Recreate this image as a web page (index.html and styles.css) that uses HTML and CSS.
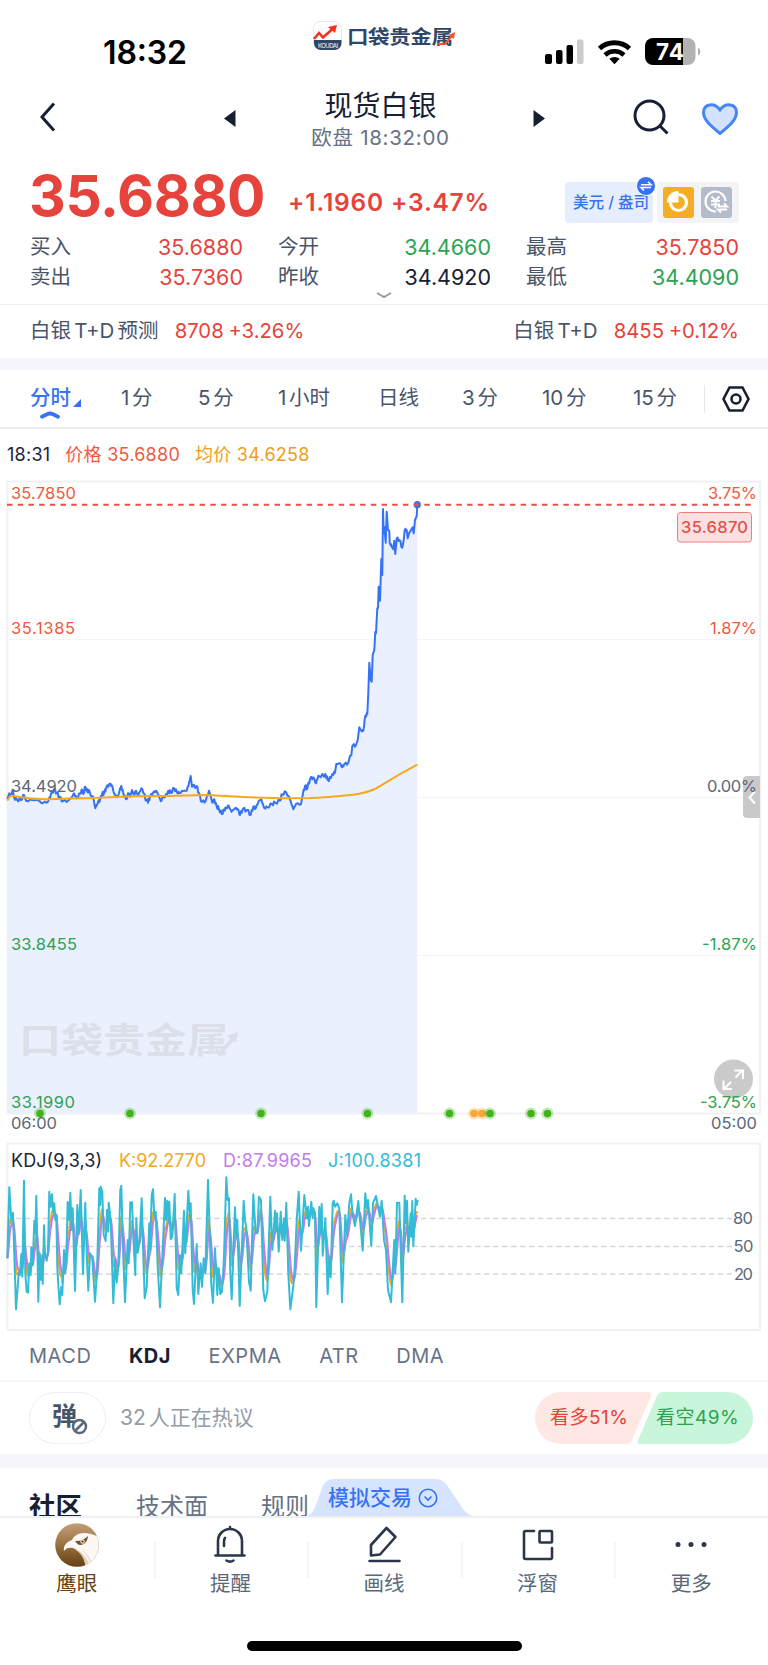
FILE: index.html
```html
<!DOCTYPE html>
<html lang="zh-CN">
<head>
  <meta charset="UTF-8">
  <title>现货白银</title>
  <link rel="stylesheet" href="styles.css">
</head>
<body>
  <div class="status-bar">
    <svg width="768" height="80" viewBox="0 0 768 80">
      <text class="clock" x="103" y="64" textLength="84">18:32</text>
      <!-- app logo -->
      <rect x="313.500" y="21.500" width="28" height="28" rx="7" fill="#fff" stroke="#e6e8ec"/>
      <path d="M314 40h27.500v3a7 7 0 0 1-7 7h-13.500a7 7 0 0 1-7-7z" fill="#2f4667"/>
      <path d="M314 39l5-6 4 4.500 10-9" fill="none" stroke="#f5301b" stroke-width="2.600"/>
      <path d="M328 27l9-2-2 8z" fill="#f5301b"/>
      <text x="318" y="47.500" font-size="6" fill="#fff" textLength="20">KOUDAI</text>
      <text class="brand" transform="translate(347 43.500) scale(1 .88)" textLength="106">口袋贵金属</text>
      <path d="M437 44h8l7-8" fill="none" stroke="#f5532f" stroke-width="2"/>
      <path d="M449 35l6-3-1 7z" fill="#f5532f"/>
      <!-- signal -->
      <rect x="545" y="54" width="7" height="10" rx="2"/>
      <rect x="556" y="50" width="6.500" height="14" rx="2"/>
      <rect x="566.500" y="45" width="6.500" height="19" rx="2"/>
      <rect x="577" y="39.500" width="6.500" height="24.500" rx="2" fill="#ccc"/>
      <!-- wifi -->
      <path d="M599.500 48.500a22.500 22.500 0 0 1 30 0" fill="none" stroke="#000" stroke-width="5"/>
      <path d="M605 55a14 14 0 0 1 19 0" fill="none" stroke="#000" stroke-width="4.600"/>
      <path d="M609.300 58.800a8 8 0 0 1 10.400 0l-5.200 5.400z"/>
      <!-- battery -->
      <path d="M653 38h30v27h-30a8 8 0 0 1-8-8v-11a8 8 0 0 1 8-8z"/>
      <path d="M683 38h4.500a8 8 0 0 1 8 8v11a8 8 0 0 1-8 8h-4.500z" fill="#b2b2b2"/>
      <path d="M698 47.500a4.500 4.500 0 0 1 0 8z" fill="#b2b2b2"/>
      <text x="656" y="60" font-size="22.500" font-weight="700" fill="#fff" textLength="28">74</text>
    </svg>
  </div>

  <header class="header">
    <svg class="back" width="16" height="30" viewBox="0 0 16 30"><path d="M14 1.500L2 15l12 13.500"/></svg>
    <svg class="prev" width="12" height="17" viewBox="0 0 12 17"><path d="M11.500 0v17L0 8.500z"/></svg>
    <div class="title">
      <h1>现货白银</h1>
      <p>欧盘 18:32:00</p>
    </div>
    <svg class="next" width="12" height="17" viewBox="0 0 12 17"><path d="M.5 0v17L12 8.500z"/></svg>
    <svg class="search" width="36" height="36" viewBox="0 0 36 36"><circle cx="16.500" cy="16.500" r="14.500"/><path d="M26.500 26.500l8 8"/></svg>
    <svg class="heart" width="36" height="32" viewBox="0 0 36 32"><path d="M18 30.500C8 22 1.500 16.500 1.500 9.500 1.500 1.500 12-1.500 18 7 24-1.500 34.500 1.500 34.500 9.500 34.500 16.500 28 22 18 30.500z"/></svg>
  </header>

  <section class="quote">
    <div class="quote-top">
      <span class="price">35.6880</span>
      <span class="change">+1.1960 +3.47%</span>
      <div class="unit">美元 / 盎司
        <svg class="swap" width="20" height="20" viewBox="0 0 20 20"><circle cx="10" cy="10" r="9.500" fill="#3772f5" stroke="#fff"/><path d="M5 8.700h10l-3-3M15 11.500H5l3 3" fill="none" stroke="#fff" stroke-width="1.600"/></svg>
      </div>
      <div class="modes">
        <svg width="31" height="31" viewBox="0 0 31 31"><rect width="31" height="31" rx="3" fill="#f3ae25"/><path d="M15.500 7.500a8 8 0 1 1-8 8" fill="none" stroke="#fff" stroke-width="3.200"/><path d="M4 15.500A11 11 0 0 1 15.500 4v11.500z" fill="#fff"/></svg>
        <svg width="31" height="31" viewBox="0 0 31 31"><rect width="31" height="31" rx="3" fill="#b5bcc9"/><path d="M15 24.500A10 10 0 1 1 24.500 14" fill="none" stroke="#fff" stroke-width="2.200"/><path d="M10.500 9.500l4 4 4-4M10 14h9M10 17.500h9M14.500 13.500V21M17 19.500h9l-3-3M26 22.500h-9l3 3" fill="none" stroke="#fff" stroke-width="2"/></svg>
      </div>
    </div>
    <div class="quote-grid">
      <div class="cell"><span>买入</span><b class="up">35.6880</b></div>
      <div class="cell"><span>今开</span><b class="down">34.4660</b></div>
      <div class="cell"><span>最高</span><b class="up">35.7850</b></div>
      <div class="cell"><span>卖出</span><b class="up">35.7360</b></div>
      <div class="cell"><span>昨收</span><b>34.4920</b></div>
      <div class="cell"><span>最低</span><b class="down">34.4090</b></div>
    </div>
    <svg class="more-arrow" width="16" height="7" viewBox="0 0 16 7"><path d="M1 1l7 4 7-4" fill="none" stroke="#929ba8" stroke-width="2"/></svg>
  </section>

  <section class="related">
    <div><span>白银 T+D 预测</span><b>8708 +3.26%</b></div>
    <div><span>白银 T+D</span><b>8455 +0.12%</b></div>
  </section>

  <nav class="periods">
    <span class="period active">分时
      <svg class="corner" width="8" height="8" viewBox="0 0 8 8"><path d="M8 0v8H0z"/></svg>
      <svg class="caret" width="20" height="8" viewBox="0 0 20 8"><path d="M2 5.700l5.500-2.700q2.500-1 5 0l5.500 2.700"/></svg>
    </span>
    <span class="period">1 分</span>
    <span class="period">5 分</span>
    <span class="period">1 小时</span>
    <span class="period">日线</span>
    <span class="period">3 分</span>
    <span class="period">10 分</span>
    <span class="period">15 分</span>
    <div class="settings">
      <svg width="28" height="26" viewBox="0 0 28 26"><path d="M7.500 1.500h13L26.500 13l-6 11.500h-13L1.500 13z"/><circle cx="14" cy="13" r="4.500"/></svg>
    </div>
  </nav>

  <div class="legend">
    <span class="time">18:31</span>
    <span class="last">价格 35.6880</span>
    <span class="avg">均价 34.6258</span>
  </div>

  <svg class="chart" width="768" height="860" viewBox="0 480 768 860">
    <!-- intraday price -->
    <path class="frame" d="M7.500 481.500h752.500v632H7.500z"/>
    <path class="grid" d="M8 639.500h745M8 797.500h745M8 955.500h745"/>
    <path id="area"/>
    <g class="watermark">
      <text transform="translate(19 1053) scale(1 .84)" textLength="210">口袋贵金属</text>
      <path d="M219 1054l15-16" stroke="#dcdfe8" stroke-width="4"/>
      <path d="M227 1036l11-4-2 11z"/>
    </g>
    <path id="price"/>
    <path class="average" d="M7.300 800.700C9 797 10 795.700 12 795.700C25 798 35 799.300 47 799.300C70 798.700 80 798 93 798L133 796.300L167 796L207 795C230 796 240 797 250 797.300L283 798.300L310 798C325 797.500 340 796 353 794.700Q366 793 375 789C384 784 392 778 417.300 764.700"/>
    <circle cx="417.300" cy="504.700" r="3.600" fill="#3772f5"/>
    <path class="last-line" d="M7 504.700h746"/>
    <g class="up-text">
      <text x="11" y="498.500" textLength="65">35.7850</text>
      <text x="11" y="634" textLength="64">35.1385</text>
      <text x="708" y="498.500" textLength="49">3.75%</text>
      <text x="710" y="634" textLength="47">1.87%</text>
    </g>
    <rect x="677.500" y="512.500" width="74" height="29.500" rx="3" fill="#fae0e0" stroke="#ed7f7b"/>
    <text class="last-price" x="681" y="533" textLength="67">35.6870</text>
    <path d="M760 776h-13q-4 0-4 4v34q0 4 4 4h13z" fill="#c9c9c9"/>
    <path d="M755 791.500l-5.500 6 5.500 6" fill="none" stroke="#fff" stroke-width="2"/>
    <text x="11" y="792" textLength="66">34.4920</text>
    <text x="707" y="792" textLength="50">0.00%</text>
    <circle cx="733.500" cy="1079" r="19.500" fill="#cacaca"/>
    <path d="M735.500 1077.500l7-7m-8 0h8.500v8.500M731 1082l-7 7m8 0h-8.500v-8.500" fill="none" stroke="#fff" stroke-width="2"/>
    <g class="down-text">
      <text x="11" y="950" textLength="66">33.8455</text>
      <text x="11" y="1108" textLength="64">33.1990</text>
      <text x="702" y="950" textLength="55">-1.87%</text>
      <text x="700" y="1108" textLength="57">-3.75%</text>
    </g>
    <g id="events"></g>
    <text x="11" y="1129" textLength="46">06:00</text>
    <text x="711" y="1129" textLength="46">05:00</text>

    <!-- KDJ -->
    <path class="frame" d="M7.500 1143.500h752.500v186.500H7.500z"/>
    <path class="kdj-grid" d="M7 1218.500h725M7 1246.500h725M7 1274h725"/>
    <path id="line-k"/>
    <path id="line-d"/>
    <path id="line-j"/>
    <g class="kdj-text">
      <text x="11" y="1167" textLength="91" fill="#1b2438">KDJ(9,3,3)</text>
      <text x="119" y="1167" textLength="87" fill="#f5a623">K:92.2770</text>
      <text x="223" y="1167" textLength="89" fill="#c37bea">D:87.9965</text>
      <text x="328" y="1167" textLength="93" fill="#33bcd6">J:100.8381</text>
    </g>
    <text x="733" y="1224" textLength="20">80</text>
    <text x="733.500" y="1252" textLength="20">50</text>
    <text x="734" y="1279.500" textLength="19">20</text>
  </svg>

  <nav class="indicators">
    <span>MACD</span>
    <span class="active">KDJ</span>
    <span>EXPMA</span>
    <span>ATR</span>
    <span>DMA</span>
  </nav>

  <section class="talk">
    <div class="danmu">弹
      <svg width="17" height="17" viewBox="0 0 17 17"><circle cx="8.500" cy="8.500" r="6.500"/><path d="M4.500 12.500l8-8"/></svg>
    </div>
    <span class="talk-text">32 人正在热议</span>
    <div class="vote">
      <svg width="218" height="52" viewBox="0 0 218 52"><path d="M26 0h87q4 0 3 4L97 48q-2 4-5 4H26a26 26 0 0 1 0-52z" fill="#ffe7e4"/><path d="M128 0h64a26 26 0 0 1 0 52h-87q-4 0-2-4L122 4q2-4 6-4z" fill="#c9f5da"/></svg>
      <span class="bull">看多51%</span>
      <span class="bear">看空49%</span>
    </div>
  </section>

  <section class="community">
    <h2>社区</h2>
    <span>技术面</span>
    <span>规则</span>
    <div class="trade">
      <svg width="220" height="39" viewBox="0 0 220 39"><path d="M0 39q9-2 13-13L19 9q3-9 12-9h101q9 0 14 9l14 21q5 7 15 7.500l35 1.500z" fill="#d6e4ff"/></svg>
      <span>模拟交易</span>
      <svg class="down-circle" width="20" height="20" viewBox="0 0 20 20"><circle cx="10" cy="10" r="8.700"/><path d="M6.500 8.500L10 12l3.500-3.500"/></svg>
    </div>
  </section>

  <footer class="toolbar">
    <div class="tool eagle">
      <svg width="44" height="44" viewBox="0 0 44 44">
        <defs><linearGradient id="brown" x1="0" y1="0" x2="0" y2="1"><stop offset="0" stop-color="#c79f76"/><stop offset="1" stop-color="#66400f"/></linearGradient><clipPath id="round"><circle cx="22" cy="22" r="21.800"/></clipPath></defs>
        <g clip-path="url(#round)">
          <path d="M0 0h44v44H0z" fill="url(#brown)"/>
          <path d="M9 28c-1-6 3-9 8-11 3-7 13-10 27-3v30H31c-1-9-5-16-13-19-4-1-7 0-9 3z" fill="#fbf8f4"/>
          <path d="M17 24.500c8 2 15 9 18 19.500h-4.500c-1-9-5-15-13.500-19.500z" fill="#dfcfbb"/>
          <path d="M26 26c5 3 10 8 12 18h-2c-1-8-5-13-10-18z" fill="#e9dccb"/>
          <path d="M20 18c4 .5 9-1 13-5-.5 7-5 10-10 8.500" fill="#76502a"/><circle cx="27.500" cy="18.500" r="2.200" fill="#f8eedf"/><circle cx="27.500" cy="18.500" r="1.100" fill="#332211"/>
        </g>
      </svg>
      <span>鹰眼</span>
    </div>
    <div class="tool">
      <svg width="44" height="44" viewBox="0 0 44 44"><path d="M10 32V18a12 12 0 0 1 24 0v14M7.500 32.500h29M22 6V4M18.500 37.500q3.500 2.200 7 0M16 23v-4q0-3 1-4"/></svg>
      <span>提醒</span>
    </div>
    <div class="tool">
      <svg width="44" height="44" viewBox="0 0 44 44"><path d="M24.500 5l9 9L18 31.500l-9 1V22zM7.500 38h30"/></svg>
      <span>画线</span>
    </div>
    <div class="tool">
      <svg width="44" height="44" viewBox="0 0 44 44"><path d="M18 8H9.500Q8 8 8 9.500v25Q8 36 9.500 36h25q1.500 0 1.500-1.500V25"/><rect x="23.500" y="8" width="12.500" height="11.500" rx="1"/></svg>
      <span>浮窗</span>
    </div>
    <div class="tool">
      <svg class="dots" width="44" height="44" viewBox="0 0 44 44"><circle cx="9" cy="21.500" r="2.500"/><circle cx="22" cy="21.500" r="2.500"/><circle cx="35" cy="21.500" r="2.500"/></svg>
      <span>更多</span>
    </div>
  </footer>
  <div class="home-indicator"></div>

  <script src="chart.js"></script>
</body>
</html>
```
FILE: styles.css
```css
* {
  box-sizing: border-box;
}

body {
  margin: 0;
  width: 768px;
  height: 1665px;
  overflow: hidden;
  background-color: #fff;
  color: #485569;
  font-family: Inter, 'Noto Sans CJK SC', sans-serif;
  font-size: 20.5px;
  white-space: nowrap;
}

svg {
  display: block;
  flex: none;
}

b {
  font-weight: 400;
}

.status-bar {
  height: 80px;
}

.clock {
  font-size: 32px;
  font-weight: 600;
}

.brand {
  font-size: 21.5px;
  font-weight: 700;
  fill: #2f4667;
}

/* header */
.header {
  display: flex;
  align-items: flex-start;
  height: 90px;
}

.header svg {
  fill: none;
  stroke: #172033;
  stroke-width: 3;
}

.header .back {
  margin: 22px 0 0 40px;
}

.header .prev,
.header .next {
  margin-top: 30px;
  fill: #172033;
  stroke: none;
}

.header .prev {
  margin-left: 168px;
}

.title {
  width: 297px;
  padding: 6px 8px 0 0;
  text-align: center;
}

.title h1 {
  margin: 0;
  font-size: 28px;
  font-weight: 400;
  line-height: 40px;
  color: #172033;
}

.title p {
  margin: 1px 0 0;
  font-size: 20.5px;
  letter-spacing: 0.7px;
  line-height: 22px;
  color: #667386;
}

.header .search {
  margin: 19px 0 0 88px;
}

.header .heart {
  margin: 23px 0 0 33px;
  fill: #d2e2ff;
  stroke: #4785f7;
}

/* quote */
.quote {
  position: relative;
  height: 135px;
  padding: 0 29px 0 30px;
  border-bottom: 1px solid #eceef2;
}

.quote-top {
  display: flex;
  height: 60px;
}

.price {
  width: 259px;
  margin-left: -1px;
  line-height: 51px;
  font-size: 57px;
  font-weight: 700;
  letter-spacing: -0.4px;
  color: #e5433c;
}

.change {
  width: 277px;
  font-size: 24.5px;
  font-weight: 600;
  letter-spacing: 0.8px;
  line-height: 64px;
  color: #e5433c;
}

.unit {
  position: relative;
  width: 88px;
  height: 41px;
  margin-top: 12px;
  padding-left: 8px;
  border-radius: 4px;
  background-color: #e6eefe;
  font-size: 15.5px;
  font-weight: 500;
  line-height: 41px;
  color: #3772f5;
}

.swap {
  position: absolute;
  top: -6px;
  right: -3px;
}

.modes {
  display: flex;
  gap: 7px;
  width: 82px;
  height: 41px;
  margin: 12px 0 0 4px;
  padding: 5px 6px;
  border-radius: 4px;
  background-color: #f2f4f8;
}

.quote-grid {
  display: grid;
  grid-template-columns: 213px 213px 213px;
  column-gap: 35px;
  row-gap: 0;
  padding-top: 2px;
}

.cell {
  display: flex;
  justify-content: space-between;
  line-height: 30px;
}

.cell b {
  font-size: 21.5px;
  color: #172033;
}

.cell .up {
  color: #e5433c;
}

.cell .down {
  color: #2ca352;
}

.more-arrow {
  position: absolute;
  left: 376px;
  top: 122px;
}

.related {
  display: flex;
  justify-content: space-between;
  height: 65px;
  padding: 0 29px 0 30px;
  border-bottom: 12px solid #f4f6fb;
  line-height: 52px;
  word-spacing: -2.5px;
}

.related b {
  margin-left: 16px;
  font-size: 20.3px;
  word-spacing: -1px;
  color: #e5433c;
}

/* periods */
.periods {
  display: grid;
  grid-template-columns: 91px 77px 80px 100px 84px 80px 91px 71px 1fr;
  align-items: center;
  height: 59px;
  padding-left: 30px;
  border-bottom: 2px solid #eceef1;
  line-height: 30px;
  word-spacing: -3px;
}

.period {
  padding-bottom: 2px;
}

.period.active {
  position: relative;
  font-weight: 500;
  color: #3772f5;
}

.corner {
  position: absolute;
  left: 43px;
  top: 16px;
  fill: #3772f5;
}

.caret {
  position: absolute;
  left: 10px;
  top: 28px;
  fill: none;
  stroke: #3772f5;
  stroke-width: 3.8;
  stroke-linecap: round;
}

.settings {
  height: 28px;
  padding: 1px 0 0 17px;
  border-left: 1px solid #e4e7eb;
  fill: none;
  stroke: #172033;
  stroke-width: 2.6;
}

.legend {
  display: flex;
  gap: 15px;
  height: 51px;
  padding-left: 7px;
  font-size: 18px;
  letter-spacing: 0.25px;
  line-height: 52px;
  color: #1b2438;
}

.legend .last {
  color: #f2583e;
}

.legend .avg {
  color: #ef9d1a;
}

/* charts */
.chart {
  font-size: 16.5px;
  fill: #5b6879;
}

.frame {
  fill: none;
  stroke: #f0f1f2;
  stroke-width: 2;
}

.grid {
  fill: none;
  stroke: #f3f4f5;
}

.kdj-grid {
  fill: none;
  stroke: #d5d7dc;
  stroke-width: 1.3;
  stroke-dasharray: 5.5 3.5;
}

#area {
  fill: #eaf0fe;
}

#price,
#line-k,
#line-d,
#line-j,
.average {
  fill: none;
  stroke: #3772f5;
  stroke-width: 2;
  stroke-linejoin: round;
}

.average,
#line-k {
  stroke: #f5a91f;
}

#line-d {
  stroke: #c37bea;
}

#line-j {
  stroke: #33bcd6;
}

.last-line {
  stroke: #e8504a;
  stroke-width: 2;
  stroke-dasharray: 5.5 5.2;
}

.up-text {
  fill: #f2583e;
}

.down-text {
  fill: #2ca352;
}

.last-price {
  font-weight: 500;
  fill: #e5504b;
}

.watermark {
  font-size: 42px;
  font-weight: 700;
  fill: #dcdfe8;
}

.kdj-text {
  font-size: 18px;
}

/* indicators */
.indicators {
  display: flex;
  gap: 37.5px;
  height: 42px;
  padding-left: 29px;
  border-bottom: 2px solid #f5f6f8;
  font-size: 20px;
  letter-spacing: 0.55px;
  line-height: 33px;
  color: #667386;
}

.indicators .active {
  font-weight: 700;
  color: #172033;
}

/* talk */
.talk {
  display: flex;
  align-items: center;
  height: 86px;
  padding: 0 15px 1px 29px;
  border-bottom: 14px solid #f4f6fb;
}

.danmu {
  position: relative;
  width: 77px;
  height: 52px;
  padding-left: 22px;
  border: 1px solid #eceef1;
  border-radius: 26px;
  font-size: 25px;
  font-weight: 700;
  line-height: 47px;
}

.danmu svg {
  position: absolute;
  left: 41px;
  top: 25px;
  fill: #fff;
  stroke: #5b6879;
  stroke-width: 2.5;
}

.talk-text {
  margin: -3px 0 0 14px;
  font-size: 21px;
  word-spacing: -3px;
  color: #929ba8;
}

.vote {
  position: relative;
  margin-left: auto;
  font-size: 19px;
  letter-spacing: 0.5px;
  line-height: 52px;
}

.bull,
.bear {
  position: absolute;
  top: 0;
  left: 15px;
  color: #e5433c;
}

.bear {
  left: 121px;
  color: #2ca352;
}

/* community */
.community {
  position: relative;
  display: flex;
  align-items: flex-start;
  height: 48px;
  padding: 17px 0 0 29px;
  overflow: hidden;
  font-size: 24px;
  line-height: 44px;
  color: #667386;
}

.community h2 {
  margin: 0 54px 0 0;
  font-size: 26.5px;
  font-weight: 700;
  line-height: 42px;
  color: #172033;
}

.community > span {
  margin-right: 53px;
}

.trade {
  position: absolute;
  left: 303px;
  top: 11px;
  font-size: 21px;
  font-weight: 500;
  line-height: 38px;
  color: #3772f5;
}

.trade span {
  position: absolute;
  left: 25px;
  top: 0;
}

.down-circle {
  position: absolute;
  left: 115px;
  top: 9px;
  fill: none;
  stroke: #3772f5;
  stroke-width: 1.6;
}

/* toolbar */
.toolbar {
  display: flex;
  height: 123px;
  border-top: 2px solid #eff0f2;
}

.tool {
  flex: 1;
  display: flex;
  flex-direction: column;
  align-items: center;
  padding-top: 5px;
  line-height: 33px;
  color: #5b6879;
}

.tool + .tool {
  background: linear-gradient(#f1f2f4, #f1f2f4) no-repeat left 24px / 1.5px 36px;
}

.tool svg {
  fill: none;
  stroke: #2b364a;
  stroke-width: 2.6;
  stroke-linejoin: round;
  stroke-linecap: round;
}

.tool .dots {
  fill: #2b364a;
  stroke: none;
}

.eagle {
  color: #66400f;
}

.eagle svg {
  stroke: none;
}

.home-indicator {
  width: 275px;
  height: 10px;
  margin: 2px auto 0;
  border-radius: 5px;
  background-color: #000;
}
```
FILE: chart.js
```javascript
// price points, x y pairs
const price = [
  7.3,799.3, 9.3,793.3, 11,796, 12.7,790, 14,797.3, 16.7,799.3, 20.7,800, 24,795, 26,800.7, 31.7,800, 37.3,800, 42.7,803.3, 48.3,801.3,
  50.7,795, 54,789.3, 56.7,792.7, 59.3,796.7, 62.7,801.3, 68.3,800.7, 71.7,797.3, 74,793.3, 76.7,798.3, 80,793.3, 82.3,790, 83.3,794,
  85.3,786.7, 87.3,791.7, 89.3,790.7, 91,796, 93,796.7, 95.3,808.3, 97.7,802.7, 100,800, 102,794, 104,793.3, 106,788.3, 109.3,784, 112,785.3,
  114,793.3, 117.3,797.3, 121.3,786, 123.3,793.3, 126,799.3, 128.7,793.3, 130.3,796.7, 132,790, 134,795, 136,790.7, 138,796, 141.3,788.3,
  144,793.3, 146,800.7, 147.7,799.3, 148,802.7, 150,796.7, 152.7,793.3, 156,790.7, 158.7,795, 160.7,801.3, 163.3,796.7, 166.7,795, 168.3,790.7,
  170.7,792.7, 174,788.3, 176.7,791.7, 179.3,793.3, 182.7,791, 186.7,790.7, 189,783.3, 190.7,776, 192,786.7, 196.7,786, 198.7,792.7, 201.7,802,
  205.7,801, 209,790.7, 210.7,796, 212.3,802.7, 214.3,799.3, 216.7,806.7, 218.7,808.3, 221.7,814, 224,810, 226,808.3, 228.7,805.7, 231.3,811.7,
  235,808.3, 237.7,809, 240,815, 242.7,809.3, 246.7,810, 250.7,814.7, 253.3,806.7, 255.7,808.3, 258.7,801, 261.3,799.3, 264,807.7, 267.3,807.3,
  271.7,804, 275,802.7, 280,800.7, 282,794.3, 286,792, 290,799.3, 293.3,809.3, 296,804, 301,804, 302.7,795, 305,786, 307.3,788.3, 310,779,
  313.3,777.3, 316,783.3, 318.3,775.7, 320.7,777.3, 322.3,774, 324,776.7, 325.3,774, 327.7,780, 330.7,778.3, 332.3,774, 335,772.7, 336.3,764,
  340,763.3, 342,767.3, 344,764.7, 348.3,762.7, 350,756, 351.3,755.3, 352.3,746, 356,745, 357.7,740, 359.3,727.3, 361.3,730.7, 363.3,730.7,
  365.3,715.7, 367.3,714, 368.3,693.3, 369.3,662.7, 370.7,680, 371.7,681.7, 372.7,655, 374.3,650, 375.3,631.7, 376,633.3, 377.3,608.3,
  378,608.3, 378.7,586.7, 380,600.7, 381.3,559, 382.3,575, 383,509, 383.7,533.3, 384.3,526.7, 385.7,542.7, 386.7,511.7, 388,530, 389.3,530.7,
  389.7,542.3, 391.7,546.7, 393.3,549.3, 394.3,540.7, 395.3,554, 396.7,538.3, 399.3,540, 402.3,547.7, 403.7,540, 404.7,530, 406.7,530,
  407.7,538.3, 409.3,532.7, 412.7,527.3, 413.7,533.3, 415,520, 416.7,516, 417.3,504.7
];

// J line in thirds of a pixel, counted from y = 1140
const j = [
  22,355, 28,142, 34,240, 39,218, 48,508, 56,400, 60,405, 64,342, 67,410, 72,122, 76,400, 80,455, 84,458, 88,370, 92,405, 94,322, 98,375,
  103,243, 106,280, 109,167, 113,370, 115,485, 119,340, 123,420, 127,345, 128,432, 132,256, 135,345, 140,362, 144,330, 148,155, 152,200,
  156,163, 159,215, 163,190, 166,240, 169,225, 172,380, 175,435, 179,493, 184,440, 187,465, 192,330, 196,400, 200,305, 203,186, 207,240,
  211,158, 215,270, 218,205, 225,453, 232,195, 236,280, 242,150, 249,403, 256,188, 260,340, 265,452, 270,340, 277,355, 285,485, 291,395,
  298,145, 301,195, 302,140, 307,155, 311,285, 317,303, 321,210, 325,275, 326,188, 332,240, 340,490, 345,360, 350,428, 355,380, 361,150,
  364,137, 370,350, 375,487, 383,300, 386,370, 391,187, 396,187, 400,290, 406,405, 409,235, 413,338, 418,310, 425,175, 430,350, 434,475,
  440,440, 448,250, 450,330, 455,165, 459,148, 463,230, 467,215, 473,380, 480,502, 487,350, 495,174, 498,240, 502,182, 506,245, 508,185,
  512,298, 517,290, 524,162, 530,445, 535,465, 540,345, 544,400, 552,212, 556,340, 565,152, 570,235, 572,190, 578,450, 582,492, 590,312,
  595,462, 602,370, 606,440, 611,355, 616,400, 624,120, 630,300, 634,435, 639,488, 645,325, 652,465, 656,385, 661,463, 666,455, 672,350,
  679,112, 683,180, 687,175, 691,400, 695,478, 705,202, 709,290, 712,240, 719,498, 731,182, 735,240, 739,265, 747,425, 752,452, 760,163,
  767,280, 772,280, 777,170, 783,180, 790,450, 795,484, 802,455, 811,170, 817,330, 825,212, 828,275, 831,220, 836,335, 842,215, 847,300,
  852,235, 854,302, 859,188, 865,400, 871,508, 880,440, 884,380, 890,240, 896,155, 903,332, 913,165, 921,235, 924,200, 927,258, 934,185,
  938,235, 940,205, 945,220, 949,502, 958,200, 962,280, 965,192, 968,347, 976,235, 983,462, 988,350, 992,412, 998,190, 1001,182, 1005,200,
  1012,190, 1018,206, 1026,487, 1036,225, 1041,285, 1048,190, 1053,163, 1058,225, 1065,258, 1075,183, 1080,240, 1088,332, 1096,160,
  1100,205, 1104,180, 1114,317, 1119,190, 1128,168, 1134,200, 1140,230, 1145,182, 1152,300, 1158,330, 1164,450, 1173,487, 1183,300,
  1186,400, 1191,188, 1198,188, 1207,487, 1214,167, 1218,250, 1221,182, 1225,335, 1232,220, 1234,290, 1237,183, 1240,318, 1247,176,
  1250,195, 1253,180
];

function toPath(points) {
  return 'M' + points.map(p => p[0].toFixed(1) + ' ' + p[1].toFixed(1)).join('L');
}

function pairs(list) {
  const result = [];
  for (let i = 0; i < list.length; i += 2) result.push([list[i], list[i + 1]]);
  return result;
}

const priceLine = [];
const pricePoints = pairs(price);
pricePoints.forEach((p, i) => {
  priceLine.push(p);
  const next = pricePoints[i + 1];
  if (next && next[0] - p[0] > 1.8) {
    const wobble = Math.sin(i * 12.9) * 1.8;
    priceLine.push([p[0] * 0.6 + next[0] * 0.4, p[1] * 0.6 + next[1] * 0.4 + wobble]);
    priceLine.push([p[0] * 0.3 + next[0] * 0.7, p[1] * 0.3 + next[1] * 0.7 - wobble]);
  }
});
document.getElementById('price').setAttribute('d', toPath(priceLine));
document.getElementById('area').setAttribute('d', toPath(priceLine) + 'V1113H7.3Z');

// J = 3K - 2D, so D and K follow from J
const jPoints = pairs(j).map(p => [p[0] / 3, 1140 + p[1] / 3]);
const kPoints = [];
const dPoints = [];
let d = jPoints[0][1];
let index = 0;
for (let x = jPoints[0][0]; x <= 417.6; x += 0.55) {
  while (index < jPoints.length - 2 && jPoints[index + 1][0] < x) index++;
  const a = jPoints[index];
  const b = jPoints[index + 1];
  const y = a[1] + (b[1] - a[1]) * (x - a[0]) / (b[0] - a[0]);
  d = (6 * d + y) / 7;
  kPoints.push([x, (y + 2 * d) / 3]);
  dPoints.push([x, d]);
}
document.getElementById('line-k').setAttribute('d', toPath(kPoints));
document.getElementById('line-d').setAttribute('d', toPath(dPoints));
document.getElementById('line-j').setAttribute('d', toPath(jPoints));

// calendar events on the time axis
const green = '#43b31b';
const orange = '#fba733';
const events = [[40, green], [130, green], [261, green], [367.5, green], [449.5, green], [474, orange], [482, orange], [490, green], [531, green], [547.5, green]];
document.getElementById('events').innerHTML = events.map(([x, color]) =>
  `<circle cx="${x}" cy="1113.500" r="6" fill="${color}" opacity="0.300"/><circle cx="${x}" cy="1113.500" r="3.800" fill="${color}"/>`
).join('');
```
